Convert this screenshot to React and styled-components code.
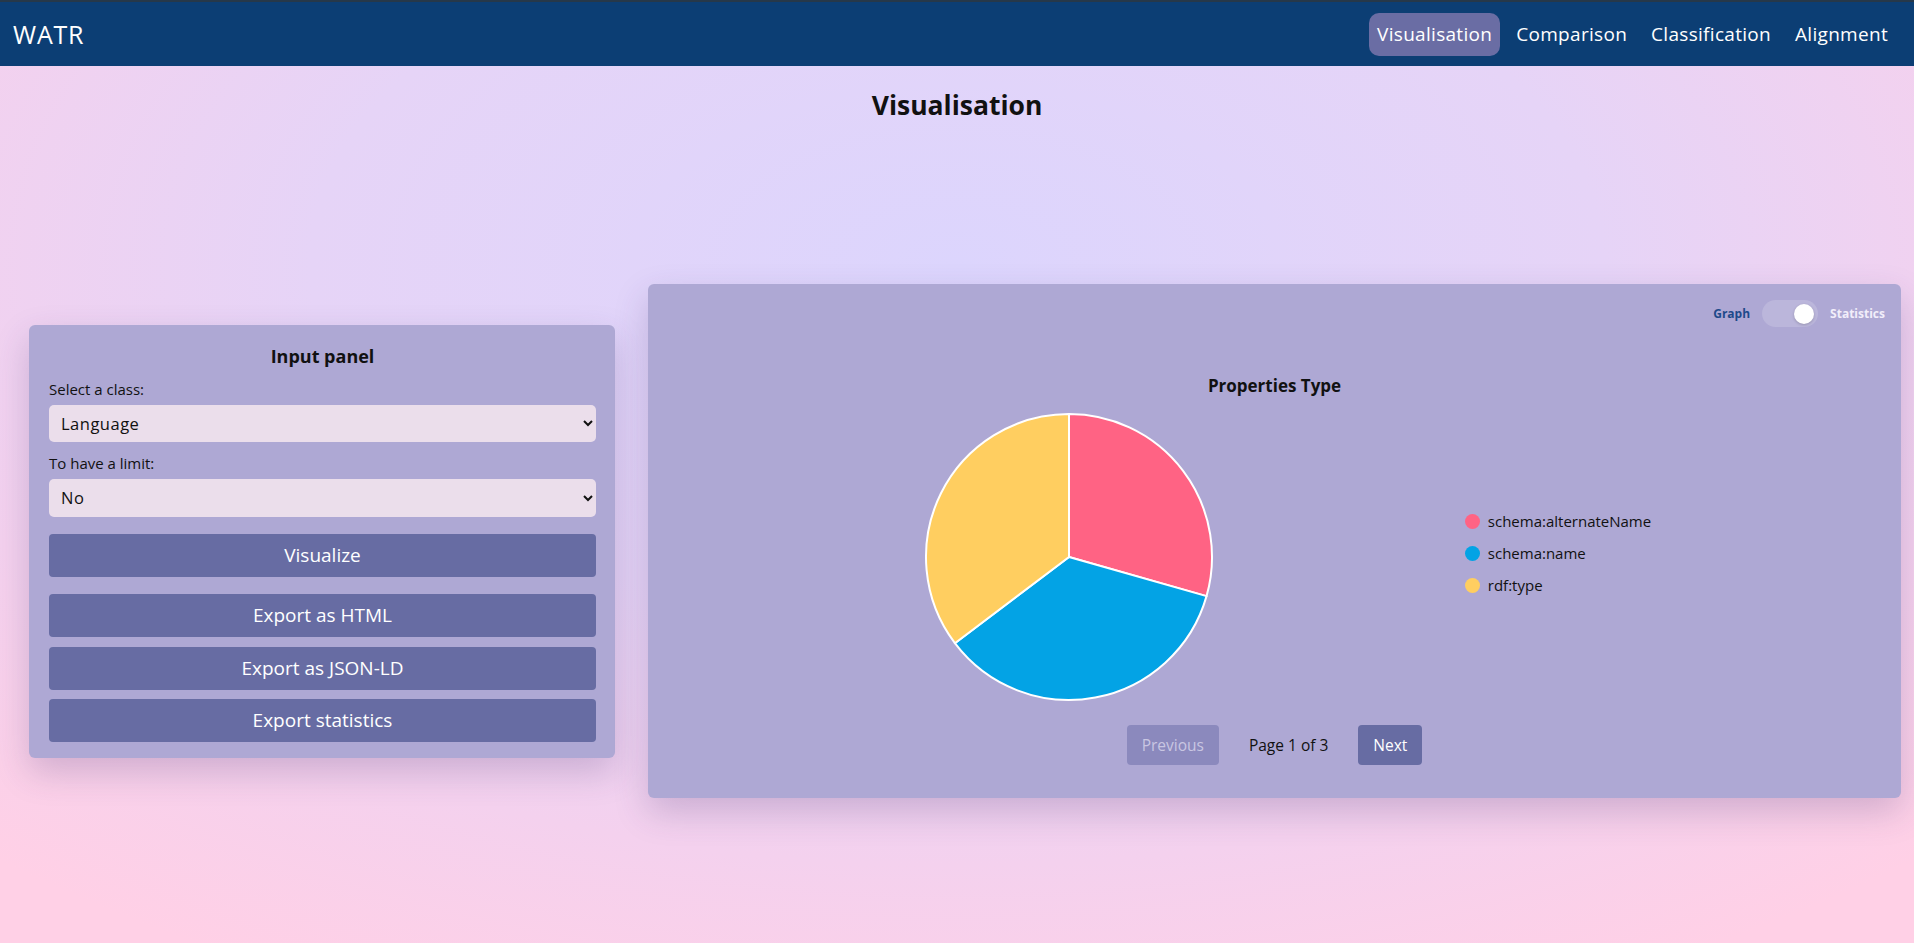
import React from "react";
import styled, { createGlobalStyle } from "styled-components";

const GlobalStyle = createGlobalStyle`
  html, body {
    margin: 0;
    padding: 0;
  }
  body {
    font-family: "Open Sans", "Noto Sans", sans-serif;
    color: #111;
    background: #ddd6fb;
  }
  * { box-sizing: border-box; }
`;

const Page = styled.div`
  min-height: 100vh;
  background: radial-gradient(ellipse 75% 85% at 50% 28%, #dcd5fd 0%, #e6d4f7 45%, #f4d1ee 75%, #ffd0e6 100%);
`;

const NavBar = styled.nav`
  height: 66px;
  border-top: 2px solid #26384a;
  background: #0c3e74;
  display: flex;
  align-items: center;
  justify-content: space-between;
  padding: 0 18px 0 13px;
`;

const Brand = styled.div`
  font-family: "Open Sans", sans-serif;
  color: #fff;
  font-size: 25px;
  letter-spacing: 0.8px;
`;

const NavLinks = styled.div`
  display: flex;
  align-items: center;
  gap: 8px;
`;

const NavLink = styled.a`
  font-family: "Open Sans", sans-serif;
  font-size: 19px;
  letter-spacing: 0.3px;
  color: #fff;
  padding: 0 8px;
  height: 43px;
  display: flex;
  align-items: center;
  border-radius: 10px;
  background: ${(p) => (p.$active ? "#6a6da4" : "transparent")};
  text-decoration: none;
`;

const Title = styled.h1`
  margin: 0;
  padding-top: 21px;
  text-align: center;
  font-size: 26.5px;
  font-weight: 700;
  line-height: 36px;
  color: #111;
`;

const Row = styled.div`
  display: flex;
  align-items: center;
  gap: 33px;
  padding: 161px 13px 60px 29px;
`;

const Panel = styled.div`
  background: #aea8d4;
  border-radius: 6px;
  box-shadow: 0 14px 34px rgba(70, 50, 110, 0.22);
`;

const InputPanel = styled(Panel)`
  width: 586px;
  flex: none;
  padding: 19px 19px 16px 20px;
  display: flex;
  flex-direction: column;
`;

const PanelTitle = styled.h3`
  margin: 0 0 11px;
  text-align: center;
  font-size: 18px;
  line-height: 24px;
  font-weight: 700;
`;

const Label = styled.label`
  font-size: 15px;
  line-height: 20px;
  margin-bottom: 6px;
`;

const Select = styled.select`
  height: ${(p) => p.$h}px;
  width: 100%;
  border: none;
  border-radius: 5px;
  background: #ebdeeb;
  font-family: "Open Sans", sans-serif;
  font-size: 16.5px;
  letter-spacing: 0.5px;
  color: #111;
  padding: 0 8px;
  margin-bottom: ${(p) => p.$mb}px;
  outline: none;
`;

const ActionButton = styled.button`
  height: 43px;
  width: 100%;
  border: none;
  border-radius: 4px;
  background: #676ca3;
  color: #fff;
  font-family: "Open Sans", sans-serif;
  font-size: 19px;
  margin-top: ${(p) => p.$mt}px;
  cursor: pointer;
`;

const ChartPanel = styled(Panel)`
  flex: 1;
  height: 514px;
  padding: 16px 16px 0;
  display: flex;
  flex-direction: column;
`;

const ToggleRow = styled.div`
  display: flex;
  justify-content: flex-end;
  align-items: center;
  gap: 12px;
  font-size: 12px;
  font-weight: 700;
  height: 27px;
`;

const ToggleLabel = styled.span`
  color: ${(p) => (p.$on ? "#f2eefa" : "#1e4a8a")};
`;

const Track = styled.div`
  width: 56px;
  height: 27px;
  border-radius: 14px;
  background: rgba(255, 255, 255, 0.16);
  display: flex;
  align-items: center;
  justify-content: flex-end;
  padding-right: 4px;
`;

const Knob = styled.div`
  width: 20px;
  height: 20px;
  border-radius: 50%;
  background: #fff;
  box-shadow: 0 1px 3px rgba(0, 0, 0, 0.2);
`;

const ChartTitle = styled.div`
  margin-top: 47px;
  text-align: center;
  font-size: 17px;
  font-weight: 700;
  line-height: 24px;
`;

const ChartBody = styled.div`
  display: flex;
  align-items: center;
  justify-content: center;
  gap: 251px;
  padding-left: 26px;
  margin-top: 14px;
`;

const Legend = styled.ul`
  list-style: none;
  margin: 0 0 8px;
  padding: 0;
  display: flex;
  flex-direction: column;
  gap: 12px;
`;

const LegendItem = styled.li`
  display: flex;
  align-items: center;
  gap: 8px;
  font-size: 15px;
  line-height: 20px;
`;

const Dot = styled.span`
  width: 15px;
  height: 15px;
  border-radius: 50%;
  background: ${(p) => p.$color};
`;

const Pager = styled.div`
  display: flex;
  justify-content: center;
  align-items: center;
  gap: 30px;
  margin-top: 23px;
`;

const PageButton = styled.button`
  height: 40px;
  padding: 0 15px;
  border: none;
  border-radius: 4px;
  font-family: "Open Sans", sans-serif;
  font-size: 15.5px;
  background: ${(p) => (p.disabled ? "#8b89bd" : "#676ca3")};
  color: ${(p) => (p.disabled ? "#c9c6e2" : "#fff")};
`;

const PageInfo = styled.span`
  font-size: 15.5px;
`;

const data = [
  { label: "schema:alternateName", value: 5, color: "#ff6384" },
  { label: "schema:name", value: 6, color: "#03a3e5" },
  { label: "rdf:type", value: 6, color: "#ffce60" },
];

function PieChart({ size = 290, r = 143 }) {
  const c = size / 2;
  const total = data.reduce((s, d) => s + d.value, 0);
  let start = 0;
  const pt = (a) => [c + r * Math.sin(a), c - r * Math.cos(a)];
  return (
    <svg width={size} height={size} viewBox={`0 0 ${size} ${size}`}>
      {data.map((d) => {
        const sweep = (d.value / total) * Math.PI * 2;
        const [x1, y1] = pt(start);
        const [x2, y2] = pt(start + sweep);
        const large = sweep > Math.PI ? 1 : 0;
        start += sweep;
        return (
          <path
            key={d.label}
            d={`M${c},${c} L${x1},${y1} A${r},${r} 0 ${large} 1 ${x2},${y2} Z`}
            fill={d.color}
            stroke="#fff"
            strokeWidth="2"
            strokeLinejoin="round"
          />
        );
      })}
    </svg>
  );
}

export default function App() {
  return (
    <Page>
      <GlobalStyle />
      <NavBar>
        <Brand>WATR</Brand>
        <NavLinks>
          <NavLink $active>Visualisation</NavLink>
          <NavLink>Comparison</NavLink>
          <NavLink>Classification</NavLink>
          <NavLink>Alignment</NavLink>
        </NavLinks>
      </NavBar>

      <Title>Visualisation</Title>

      <Row>
        <InputPanel>
          <PanelTitle>Input panel</PanelTitle>
          <Label>Select a class:</Label>
          <Select $h={37} $mb={11} defaultValue="Language">
            <option>Language</option>
          </Select>
          <Label>To have a limit:</Label>
          <Select $h={38} $mb={0} defaultValue="No">
            <option>No</option>
          </Select>
          <ActionButton $mt={17}>Visualize</ActionButton>
          <ActionButton $mt={17}>Export as HTML</ActionButton>
          <ActionButton $mt={10}>Export as JSON-LD</ActionButton>
          <ActionButton $mt={9}>Export statistics</ActionButton>
        </InputPanel>

        <ChartPanel>
          <ToggleRow>
            <ToggleLabel>Graph</ToggleLabel>
            <Track>
              <Knob />
            </Track>
            <ToggleLabel $on>Statistics</ToggleLabel>
          </ToggleRow>
          <ChartTitle>Properties Type</ChartTitle>
          <ChartBody>
            <PieChart />
            <Legend>
              {data.map((d) => (
                <LegendItem key={d.label}>
                  <Dot $color={d.color} />
                  {d.label}
                </LegendItem>
              ))}
            </Legend>
          </ChartBody>
          <Pager>
            <PageButton disabled>Previous</PageButton>
            <PageInfo>Page 1 of 3</PageInfo>
            <PageButton>Next</PageButton>
          </Pager>
        </ChartPanel>
      </Row>
    </Page>
  );
}
